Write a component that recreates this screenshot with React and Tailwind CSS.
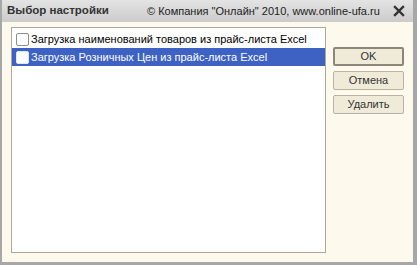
import React, { useState } from "react";

const rows = [
  "Загрузка наименований товаров из прайс-листа Excel",
  "Загрузка Розничных Цен из прайс-листа Excel",
];

const Row = ({ text, selected }) => (
  <div
    className={`flex items-center h-[18px] pl-[4px] ${
      selected ? "bg-[#3d62c4] text-white" : "text-black"
    }`}
  >
    <div
      className={`w-[13px] h-[13px] border ${
        selected ? "border-[#dfe6f6] bg-white" : "border-[#8e8f8f] bg-white"
      } rounded-[2px] mr-[2px] shrink-0`}
    />
    <span className="text-[11px] leading-none whitespace-nowrap">{text}</span>
  </div>
);

const Btn = ({ children, primary }) => (
  <button
    className={`w-[71px] h-[19px] text-[11px] leading-none text-[#333] bg-[#f0ebd9] border ${
      primary ? "border-[#8c8779] border-2" : "border-[#b8b3a3]"
    } rounded-[2px]`}
  >
    {children}
  </button>
);

export default function App() {
  const [selected] = useState(1);
  return (
    <div className="w-[417px] h-[265px] flex flex-col bg-[#fdf9ec] border-l-2 border-r-4 border-b-[3px] border-[#a7a7a7] font-['Liberation_Sans',sans-serif] overflow-hidden">
      <div className="h-[22px] shrink-0 flex items-center bg-gradient-to-b from-[#e4e4e4] to-[#cbcbcb] pl-[5px] pr-[8px] whitespace-nowrap">
        <span className="text-[11.5px] font-bold text-[#333] w-[140px] shrink-0">Выбор настройки</span>
        <span className="text-[11px] text-[#222] flex-1">
          © Компания "Онлайн" 2010, www.online-ufa.ru
        </span>
        <svg width="12" height="12" viewBox="0 0 12 12" className="shrink-0">
          <path d="M2 2 L10 10 M10 2 L2 10" stroke="#333" strokeWidth="2.4" strokeLinecap="square" />
        </svg>
      </div>
      <div className="flex-1 flex pt-[5px] pl-[9px] pb-[9px]">
        <div className="w-[315px] bg-white border border-[#aca899] pt-[2px]">
          {rows.map((r, i) => (
            <Row key={i} text={r} selected={i === selected} />
          ))}
        </div>
        <div className="flex flex-col gap-[5px] ml-[7px] pt-[20px]">
          <Btn primary>OK</Btn>
          <Btn>Отмена</Btn>
          <Btn>Удалить</Btn>
        </div>
      </div>
    </div>
  );
}
